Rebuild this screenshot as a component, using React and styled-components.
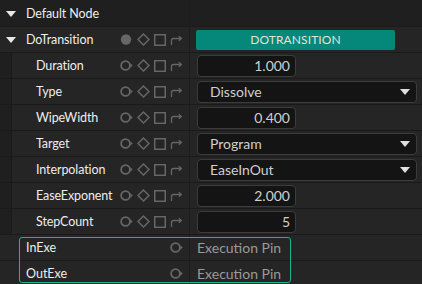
import styled, { createGlobalStyle } from 'styled-components'

const GlobalStyle = createGlobalStyle`
    html, body {
        margin: 0;
        padding: 0;
        background: #1f1f1f;
    }
    body {
        font-family: Lato, "Noto Sans", sans-serif;
        font-size: 12.5px;
        color: #e6e6e6;
    }
`

const Panel = styled.div`
    width: 422px;
    height: 284px;
    overflow: hidden;
    background: #1f1f1f;
`

const Row = styled.div`
    display: grid;
    grid-template-columns: 190px 1fr;
    height: ${p => (p.$top ? '26px' : '25px')};
    border-bottom: 1px solid #1a1a1a;
    background: ${p => (p.$top ? '#1f1f1f' : '#252525')};
`

const NameCell = styled.div`
    display: flex;
    align-items: center;
    padding-left: ${p => p.$indent ? '0' : '6px'};
    padding-right: 6px;
    border-right: 1px solid #1d1d1d;
`

const Indent = styled.div`
    width: 11px;
    height: 100%;
    background: #1f1f1f;
    border-right: 1px solid #1b1b1b;
    margin-right: 24px;
    flex-shrink: 0;
`

const Caret = styled.span`
    width: 0;
    height: 0;
    border-left: 5px solid transparent;
    border-right: 5px solid transparent;
    border-top: 6px solid #e8e8e8;
    margin-right: 10px;
    margin-top: 1px;
`

const Label = styled.span`
    flex: 1;
    min-width: 0;
    white-space: nowrap;
    letter-spacing: -0.1px;
    color: #ededed;
`

const Icons = styled.div`
    display: flex;
    align-items: center;
    gap: 4px;
    flex-shrink: 0;
    color: #666666;

    svg {
        display: block;
    }
`

const ValueCell = styled.div`
    display: flex;
    align-items: center;
    padding: 0 5px 0 7px;
`

const NumberBox = styled.div`
    box-sizing: border-box;
    width: 99px;
    height: 22px;
    background: #141414;
    border: 1px solid #3c3c3c;
    border-radius: 4px;
    text-align: right;
    padding: 0 5px;
    line-height: 20px;
    color: #cfcfcf;
    font-size: 14px;
`

const Select = styled.div`
    box-sizing: border-box;
    flex: 1;
    height: 22px;
    background: #141414;
    border: 1px solid #3c3c3c;
    border-radius: 4px;
    display: flex;
    align-items: center;
    justify-content: space-between;
    padding: 0 6px 0 12px;
    color: #cfcfcf;
    font-size: 14px;

    &::after {
        content: '';
        border-left: 5px solid transparent;
        border-right: 5px solid transparent;
        border-top: 6px solid #e0e0e0;
    }
`

const ActionButton = styled.div`
    width: 199px;
    height: 20px;
    margin-left: -1px;
    background: #05887a;
    border-radius: 2px;
    color: #e2e2d8;
    font-size: 12px;
    letter-spacing: 0.1px;
    text-align: center;
    line-height: 20px;
`

const PinText = styled.span`
    color: #9a9a9a;
    font-size: 14px;
`

const PinGroup = styled.div`
    position: relative;

    &::after {
        content: '';
        position: absolute;
        left: 19px;
        top: 2px;
        width: 270px;
        height: 44px;
        border: 1px solid #17b594;
        border-radius: 3px;
        pointer-events: none;
    }
`

const PinLabel = styled.span`
    flex: 1;
    padding-left: 20px;
    color: #ededed;
`

const DataPin = () => (
    <svg width="13" height="13" viewBox="0 0 13 13">
        <circle cx="5.5" cy="6.5" r="4.4" fill="none" stroke="currentColor" strokeWidth="1.7" />
        <path d="M10.2 4.2 L12.8 6.5 L10.2 8.8 Z" fill="currentColor" />
    </svg>
)

const FilledPin = () => (
    <svg width="13" height="13" viewBox="0 0 13 13">
        <circle cx="6" cy="6.5" r="5.2" fill="currentColor" />
    </svg>
)

const Diamond = () => (
    <svg width="13" height="13" viewBox="0 0 13 13">
        <path d="M6.5 1 L12 6.5 L6.5 12 L1 6.5 Z" fill="none" stroke="currentColor" strokeWidth="1.5" />
    </svg>
)

const Square = () => (
    <svg width="12" height="12" viewBox="0 0 12 12">
        <rect x="0.75" y="0.75" width="10.5" height="10.5" fill="none" stroke="currentColor" strokeWidth="1.5" />
    </svg>
)

const Arrow = () => (
    <svg width="13" height="12" viewBox="0 0 13 12">
        <path d="M1.5 11 V6.5 Q1.5 4.5 3.5 4.5 H11" fill="none" stroke="currentColor" strokeWidth="1.3" />
        <path d="M8.8 2.3 L11.3 4.5 L8.8 6.7" fill="none" stroke="currentColor" strokeWidth="1.3" />
    </svg>
)

const PinIcons = ({ filled }) => (
    <Icons>
        {filled ? <FilledPin /> : <DataPin />}
        <Diamond />
        <Square />
        <Arrow />
    </Icons>
)

const properties = [
    { name: 'Duration', kind: 'number', value: '1.000' },
    { name: 'Type', kind: 'select', value: 'Dissolve' },
    { name: 'WipeWidth', kind: 'number', value: '0.400' },
    { name: 'Target', kind: 'select', value: 'Program' },
    { name: 'Interpolation', kind: 'select', value: 'EaseInOut' },
    { name: 'EaseExponent', kind: 'number', value: '2.000' },
    { name: 'StepCount', kind: 'number', value: '5' },
]

const PropertyRow = ({ prop }) => (
    <Row>
        <NameCell $indent>
            <Indent />
            <Label>{prop.name}</Label>
            <PinIcons />
        </NameCell>
        <ValueCell>
            {prop.kind === 'number'
                ? <NumberBox>{prop.value}</NumberBox>
                : <Select>{prop.value}</Select>}
        </ValueCell>
    </Row>
)

const ExecRow = ({ name }) => (
    <Row>
        <NameCell>
            <PinLabel>{name}</PinLabel>
            <Icons>
                <DataPin />
            </Icons>
        </NameCell>
        <ValueCell>
            <PinText>Execution Pin</PinText>
        </ValueCell>
    </Row>
)

const App = () => {
    return (
        <Panel>
            <GlobalStyle />
            <Row $top>
                <NameCell>
                    <Caret />
                    <Label>Default Node</Label>
                </NameCell>
                <ValueCell />
            </Row>
            <Row>
                <NameCell>
                    <Caret />
                    <Label>DoTransition</Label>
                    <PinIcons filled />
                </NameCell>
                <ValueCell>
                    <ActionButton>DOTRANSITION</ActionButton>
                </ValueCell>
            </Row>
            {properties.map(p => <PropertyRow key={p.name} prop={p} />)}
            <PinGroup>
                <ExecRow name="InExe" />
                <ExecRow name="OutExe" />
            </PinGroup>
        </Panel>
    )
}

export default App
